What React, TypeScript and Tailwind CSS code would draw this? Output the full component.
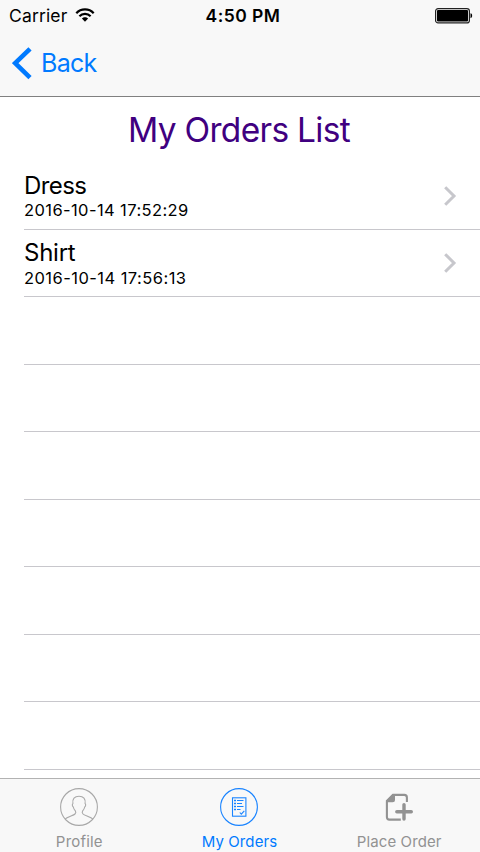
import React from "react";

type Order = { name: string; date: string; nameStyle: string; dateStyle: string };

const orders: Order[] = [
  { name: "Dress", date: "2016-10-14 17:52:29", nameStyle: "tracking-[-0.6px]", dateStyle: "tracking-[0.4px]" },
  { name: "Shirt", date: "2016-10-14 17:56:13", nameStyle: "-mt-px mb-px tracking-[-0.25px]", dateStyle: "tracking-[0.45px]" },
];

const rows: (Order | null)[] = [...orders, null, null, null, null, null, null, null];

function StatusBar() {
  return (
    <div className="grid h-[30px] grid-cols-[1fr_auto_1fr] items-center pt-[1px] text-[17.5px] leading-[30px] text-black">
      <div className="flex items-center pl-[9px]">
        <span className="tracking-[0.15px]">Carrier</span>
        <svg className="ml-[7.5px] -mt-[2px]" width="20" height="14" viewBox="0 0 20 14" fill="none" stroke="#000" strokeWidth="2.2">
          <path d="M1.3 5.2C6 .2 14 .2 18.700 5.200" />
          <path d="M4.400 8.300C7.400 5.100 12.600 5.100 15.600 8.300" />
          <path d="M6.900 10.600C8.600 8.700 11.400 8.700 13.100 10.600L10 13.800Z" fill="#000" stroke="none" />
        </svg>
      </div>
      <span className="pl-[6px] font-semibold tracking-[0.45px]">4:50 PM</span>
      <div className="flex justify-end pr-[7px]">
        <svg width="38" height="16" viewBox="0 0 38 16">
          <rect x="0.600" y="0.600" width="33.800" height="14.300" rx="2.500" fill="none" stroke="#222" strokeWidth="1.200" />
          <rect x="2" y="2" width="31" height="11.500" rx="1" fill="#000" />
          <path d="M35.500 5.300C37.700 5.600 37.700 9.900 35.500 10.200Z" fill="#000" />
        </svg>
      </div>
    </div>
  );
}

function OrderRow({ order }: { order: Order | null }) {
  return (
    <li className="ml-6 flex h-[67px] items-center justify-between border-b border-[#c8c7cc] pr-[23px] odd:h-[68px]">
      {order && (
        <>
          <div className="pt-[2px]">
            <div className={`text-[24px] leading-[28px] ${order.nameStyle}`}>{order.name}</div>
            <div className={`text-[16.500px] leading-[21px] ${order.dateStyle}`}>{order.date}</div>
          </div>
          <svg width="13" height="20" viewBox="0 0 13 20" fill="none" stroke="#c7c7cc" strokeWidth="3">
            <path d="M1.200 1.200L10 10L1.200 18.800" />
          </svg>
        </>
      )}
    </li>
  );
}

function ProfileIcon() {
  return (
    <svg width="40" height="40" viewBox="0 0 40 40" fill="none" stroke="#a8a8a8" strokeWidth="1.100">
      <circle cx="20" cy="20" r="18.400" />
      <path d="M6 32.300C8 29.800 14.500 28.600 16 27C17 25.900 16.800 24.600 16.400 24C15 22.700 14.600 21.400 14.300 20C13.200 19.200 13 17.200 13.900 16.600C13.200 12 15.500 9.300 20 9.300C24.500 9.300 26.800 12 26.100 16.600C27 17.200 26.800 19.200 25.700 20C25.400 21.400 25 22.700 23.600 24C23.200 24.600 23 25.900 24 27C25.500 28.600 32 29.800 34 32.300" />
    </svg>
  );
}

function OrdersIcon() {
  return (
    <svg width="40" height="40" viewBox="0 0 40 40" fill="none" stroke="#1a84ff" strokeWidth="1.100">
      <circle cx="20" cy="20" r="18.400" />
      <rect x="13.500" y="10.800" width="13.400" height="18.400" />
      <path d="M18 13.500H24.500M18 16.500H23M18 19.500H24.500M18 22.500H21.500" />
      <path d="M15 13.500H17M15 16.500H17M15 19.500H17M15 22.500H17" strokeWidth="1.600" />
      <path d="M20.800 25.500L22.300 27.200L25.300 23.800" />
    </svg>
  );
}

function PlaceOrderIcon() {
  return (
    <svg width="40" height="40" viewBox="0 0 40 40" fill="none" stroke="#929292" strokeWidth="2.100">
      <path d="M21.800 32.600H10.500Q7.900 32.600 7.900 30V14L14 7.900H25.300Q27.900 7.900 27.900 10.500V15" />
      <path d="M7.500 15.200V13.500L13.500 7.200H16V12.700Q16 15.200 13.500 15.200Z" fill="#929292" stroke="none" />
      <path d="M25 17.600V32M17.800 24.700H32.300" strokeWidth="3.400" strokeLinecap="round" />
    </svg>
  );
}

export default function App() {
  return (
    <main className="flex h-[852px] w-[480px] flex-col overflow-hidden bg-white font-['Inter','Liberation_Sans',sans-serif] text-black">
      <header className="h-[97px] shrink-0 border-b border-[#808080] bg-[#f8f8f8]">
        <StatusBar />
        <button className="ml-[12px] mt-[16px] flex h-[34px] items-center text-[#007aff]">
          <svg width="20" height="33" viewBox="0 0 20 33" fill="none" stroke="currentColor" strokeWidth="4.600">
            <path d="M18 1.800L3.200 16.200L18 30.600" />
          </svg>
          <span className="ml-[9px] text-[25px] leading-[34px] tracking-[-0.700px]">Back</span>
        </button>
      </header>
      <section className="min-h-0 flex-1 overflow-hidden">
        <h1 className="h-[65px] pr-[2px] pt-[10px] text-center text-[33.5px] font-normal leading-[46px] tracking-[-0.700px] text-[#400080]">
          My Orders List
        </h1>
        <ul>
          {rows.map((order, i) => (
            <OrderRow key={i} order={order} />
          ))}
        </ul>
      </section>
      <nav className="grid h-[74px] shrink-0 grid-cols-3 border-t border-[#b2b2b2] bg-[#f8f8f8] pr-[1px] text-[15px] leading-[18px] text-[#929292]">
        <div className="flex flex-col items-center pr-[1px] pt-[8px]">
          <ProfileIcon />
          <span className="mt-[6px] tracking-[0.200px]">Profile</span>
        </div>
        <div className="flex flex-col items-center pt-[8px] text-[#007aff]">
          <OrdersIcon />
          <span className="mt-[6px] tracking-[0.100px]">My Orders</span>
        </div>
        <div className="flex flex-col items-center pt-[8px]">
          <PlaceOrderIcon />
          <span className="mt-[6px] tracking-[0.100px]">Place Order</span>
        </div>
      </nav>
    </main>
  );
}
